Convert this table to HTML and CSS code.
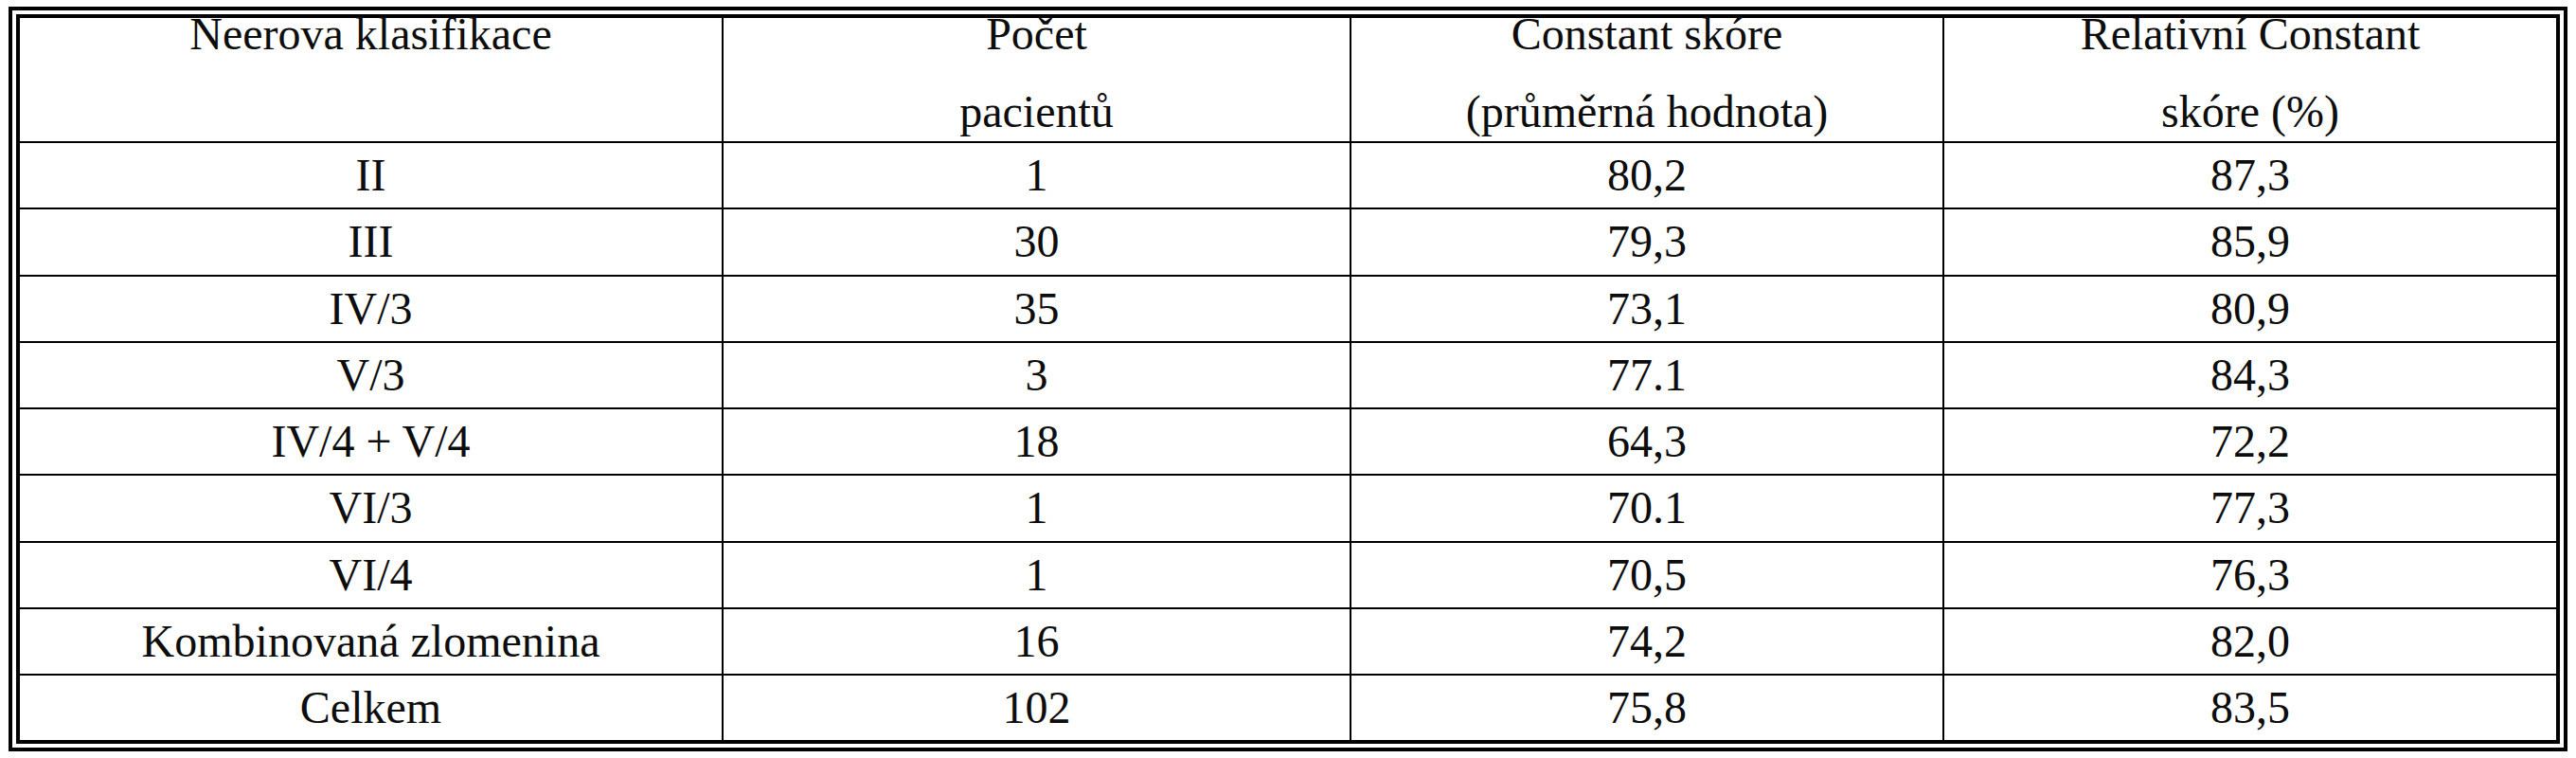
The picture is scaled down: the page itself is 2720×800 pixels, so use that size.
FILE: index.html
```html
<!DOCTYPE html>
<html lang="cs">
<head>
<meta charset="utf-8">
<title>Neerova klasifikace</title>
<link rel="stylesheet" href="styles.css">
</head>
<body>
<div class="frame">
  <table class="data">
    <colgroup>
      <col class="c1"><col class="c2"><col class="c3"><col class="c4">
    </colgroup>
    <thead>
      <tr>
        <th><span class="l1">Neerova klasifikace</span></th>
        <th><span class="l1">Počet</span><span class="l2">pacientů</span></th>
        <th><span class="l1">Constant skóre</span><span class="l2">(průměrná hodnota)</span></th>
        <th><span class="l1">Relativní Constant</span><span class="l2">skóre (%)</span></th>
      </tr>
    </thead>
    <tbody>
      <tr><td>II</td><td>1</td><td>80,2</td><td>87,3</td></tr>
      <tr><td>III</td><td>30</td><td>79,3</td><td>85,9</td></tr>
      <tr><td>IV/3</td><td>35</td><td>73,1</td><td>80,9</td></tr>
      <tr><td>V/3</td><td>3</td><td>77.1</td><td>84,3</td></tr>
      <tr><td>IV/4 + V/4</td><td>18</td><td>64,3</td><td>72,2</td></tr>
      <tr><td>VI/3</td><td>1</td><td>70.1</td><td>77,3</td></tr>
      <tr><td>VI/4</td><td>1</td><td>70,5</td><td>76,3</td></tr>
      <tr><td>Kombinovaná zlomenina</td><td>16</td><td>74,2</td><td>82,0</td></tr>
      <tr><td>Celkem</td><td>102</td><td>75,8</td><td>83,5</td></tr>
    </tbody>
  </table>
</div>
</body>
</html>
```
FILE: styles.css
```css
html, body {
  margin: 0;
  padding: 0;
  background: #ffffff;
}

.frame {
  margin: 7px 0 0 9px;
  width: 2702px;
  height: 786px;
  box-sizing: border-box;
  border: 12px double #000000;
}

.data {
  width: 100%;
  height: 100%;
  border-collapse: collapse;
  table-layout: fixed;
  font-family: "Liberation Serif", "Times New Roman", "DejaVu Serif", serif;
  font-size: 48px;
  color: #0d0d0d;
}

.c1 { width: 742px; }
.c2 { width: 663px; }
.c3 { width: 626px; }
.c4 { width: 647px; }

.data th,
.data td {
  padding: 0;
  text-align: center;
  font-weight: normal;
}

.data th + th,
.data td + td {
  border-left: 2px solid #000000;
}

.data thead tr {
  height: 131px;
}

.data th {
  vertical-align: top;
  line-height: 34px;
}

.l1,
.l2 {
  display: block;
}

.l2 {
  margin-top: 48px;
}

.data tbody tr {
  border-top: 2px solid #000000;
}

.data td {
  vertical-align: middle;
  line-height: 50px;
}
```
